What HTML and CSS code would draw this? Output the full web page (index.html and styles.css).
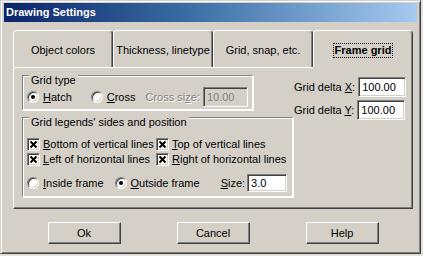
FILE: index.html
```html
<!DOCTYPE html>
<html lang="en">
<head>
    <meta charset="UTF-8">
    <title>Drawing Settings</title>
    <link rel="stylesheet" href="styles.css">
</head>
<body>
    <div class="window">
        <div class="titlebar">Drawing Settings</div>

        <div class="dialog-body">
            <div class="tabs">
                <div class="tab">Object colors</div>
                <div class="tab">Thickness, linetype</div>
                <div class="tab">Grid, snap, etc.</div>
                <div class="tab active"><span class="focus">Frame grid</span></div>
            </div>

            <div class="panel">
                <div class="group group-type">
                    <div class="group-title">Grid type</div>
                    <div class="type-row">
                        <span class="radio checked"></span>
                        <span class="opt-text"><u>H</u>atch</span>
                        <span class="radio cross-radio"></span>
                        <span class="opt-text"><u>C</u>ross</span>
                        <span class="disabled-label">Cross si<u>z</u>e:</span>
                        <span class="field field-small disabled">10.00</span>
                    </div>
                </div>

                <div class="deltas">
                    <div class="delta-row">
                        <span class="delta-label">Grid delta <u>X</u>:</span>
                        <span class="field field-delta">100.00</span>
                    </div>
                    <div class="delta-row">
                        <span class="delta-label">Grid delta <u>Y</u>:</span>
                        <span class="field field-delta">100.00</span>
                    </div>
                </div>

                <div class="group group-legends">
                    <div class="group-title">Grid legends' sides and position</div>
                    <div class="checks">
                        <div class="check-item">
                            <span class="checkbox"><svg width="11" height="11" viewBox="0 0 11 11"><path d="M2.5 2.5 L8.5 8.5 M8.5 2.5 L2.5 8.5" stroke="#000" stroke-width="2"/></svg></span>
                            <span><u>B</u>ottom of vertical lines</span>
                        </div>
                        <div class="check-item">
                            <span class="checkbox"><svg width="11" height="11" viewBox="0 0 11 11"><path d="M2.5 2.5 L8.5 8.5 M8.5 2.5 L2.5 8.5" stroke="#000" stroke-width="2"/></svg></span>
                            <span><u>T</u>op of vertical lines</span>
                        </div>
                        <div class="check-item">
                            <span class="checkbox"><svg width="11" height="11" viewBox="0 0 11 11"><path d="M2.5 2.5 L8.5 8.5 M8.5 2.5 L2.5 8.5" stroke="#000" stroke-width="2"/></svg></span>
                            <span><u>L</u>eft of horizontal lines</span>
                        </div>
                        <div class="check-item">
                            <span class="checkbox"><svg width="11" height="11" viewBox="0 0 11 11"><path d="M2.5 2.5 L8.5 8.5 M8.5 2.5 L2.5 8.5" stroke="#000" stroke-width="2"/></svg></span>
                            <span><u>R</u>ight of horizontal lines</span>
                        </div>
                    </div>
                    <div class="frame-row">
                        <span class="radio"></span>
                        <span class="opt-text"><u>I</u>nside frame</span>
                        <span class="radio outside-radio checked"></span>
                        <span class="opt-text"><u>O</u>utside frame</span>
                        <span class="size-label"><u>S</u>ize:</span>
                        <span class="field field-size">3.0</span>
                    </div>
                </div>
            </div>

            <div class="buttons">
                <div class="btn">Ok</div>
                <div class="btn">Cancel</div>
                <div class="btn">Help</div>
            </div>
        </div>
    </div>
</body>
</html>
```

FILE: styles.css
```css
* {
    margin: 0;
    padding: 0;
    box-sizing: border-box;
}

body {
    width: 423px;
    height: 256px;
    overflow: hidden;
    background: #e4e2dc;
    font-family: 'Liberation Sans', Arial, sans-serif;
    font-size: 11px;
    color: #000;
}

u {
    text-decoration: underline;
    text-underline-offset: 1px;
}

.window {
    width: 421px;
    height: 254px;
    background: #d4d0c8;
    border: 1px solid;
    border-color: #d4d0c8 #404040 #404040 #d4d0c8;
    box-shadow: inset 1px 1px #fff, inset -1px -1px #808080;
    padding: 2px 3px 3px 3px;
    display: flex;
    flex-direction: column;
}

.titlebar {
    height: 19px;
    line-height: 19px;
    padding-left: 2px;
    background: linear-gradient(to right, #0a246a 0%, #3a6ea5 45%, #a6caf0 100%);
    color: #fff;
    font-weight: bold;
}

.dialog-body {
    padding: 8px 0 0 9px;
}

/* tabs */
.tabs {
    display: flex;
    width: 400px;
    height: 37px;
}

.tab {
    flex: 1;
    display: flex;
    align-items: center;
    justify-content: center;
    border: 1px solid;
    border-bottom: none;
    border-color: #fff #404040 transparent #fff;
    border-radius: 4px 4px 0 0;
    box-shadow: inset -1px 0 #808080;
    padding-top: 1px;
}

.tab.active {
    font-weight: bold;
    position: relative;
    z-index: 1;
    height: 38px;
    background: #d4d0c8;
}

.focus {
    border: 1px dotted #000;
    padding: 0 1px;
    line-height: 13px;
}

.panel {
    width: 400px;
    height: 142px;
    border: 1px solid;
    border-color: #fff #404040 #404040 #fff;
    box-shadow: inset -1px -1px #808080;
    padding: 7px 0 0 8px;
    display: grid;
    grid-template-columns: 272px 1fr;
    grid-template-rows: 35px 80px;
    row-gap: 7px;
}

/* group boxes */
.group {
    border: 1px solid;
    border-color: #808080 #fff #fff #808080;
    box-shadow: inset 1px 1px #fff, 1px 1px #fff;
    padding: 0 0 0 4px;
}

.group-title {
    width: fit-content;
    margin: -2px 0 0 2px;
    padding: 0 2px;
    line-height: 13px;
    background: #d4d0c8;
}

.group-type {
    width: 231px;
    height: 35px;
}

.group-legends {
    width: 271px;
    height: 80px;
    grid-column: 1;
    grid-row: 2;
}

.type-row {
    display: flex;
    align-items: center;
    height: 20px;
}

.opt-text {
    margin-left: 4px;
}

.cross-radio {
    margin-left: 19px;
}

.disabled-label {
    margin-left: 10px;
    color: #808080;
    text-shadow: 1px 1px #fff;
}

/* radios and checkboxes */
.radio {
    width: 12px;
    height: 12px;
    border-radius: 50%;
    background: #fff;
    border: 1px solid;
    border-color: #808080 #fff #fff #808080;
    box-shadow: inset 1px 1px #404040, inset -1px -1px #d4d0c8;
    display: flex;
    align-items: center;
    justify-content: center;
    flex-shrink: 0;
}

.radio.checked::after {
    content: '';
    width: 4px;
    height: 4px;
    border-radius: 50%;
    background: #000;
}

.checkbox {
    width: 13px;
    height: 13px;
    background: #fff;
    border: 1px solid;
    border-color: #808080 #fff #fff #808080;
    box-shadow: inset 1px 1px #404040, inset -1px -1px #d4d0c8;
    display: flex;
    flex-shrink: 0;
}

.checks {
    display: grid;
    grid-template-columns: 129px auto;
    row-gap: 1px;
    margin-top: 8px;
}

.check-item {
    display: flex;
    align-items: center;
    gap: 3px;
    height: 14px;
}

.frame-row {
    display: flex;
    align-items: center;
    height: 18px;
    margin-top: 8px;
}

.outside-radio {
    margin-left: 11px;
}

.size-label {
    margin-left: 21px;
}

/* text fields */
.field {
    height: 20px;
    line-height: 18px;
    padding-left: 3px;
    background: #fff;
    border: 1px solid;
    border-color: #808080 #fff #fff #808080;
    box-shadow: inset 1px 1px #404040, inset -1px -1px #d4d0c8;
}

.field.disabled {
    background: #d4d0c8;
    color: #808080;
}

.field-small {
    width: 45px;
    margin-left: 3px;
}

.field-size {
    width: 40px;
    height: 18px;
    line-height: 16px;
    margin-left: 2px;
}

.deltas {
    grid-column: 2;
    grid-row: 1 / span 2;
    padding-top: 2px;
    display: flex;
    flex-direction: column;
    gap: 3px;
}

.delta-row {
    display: flex;
    align-items: center;
}

.delta-label {
    white-space: nowrap;
    margin-right: 3px;
}

.field-delta {
    width: 48px;
}

/* buttons */
.buttons {
    display: flex;
    justify-content: center;
    gap: 56px;
    margin-top: 13px;
    width: 400px;
}

.btn {
    width: 73px;
    height: 22px;
    display: flex;
    align-items: center;
    justify-content: center;
    border: 1px solid;
    border-color: #fff #404040 #404040 #fff;
    box-shadow: inset -1px -1px #808080;
}
```
